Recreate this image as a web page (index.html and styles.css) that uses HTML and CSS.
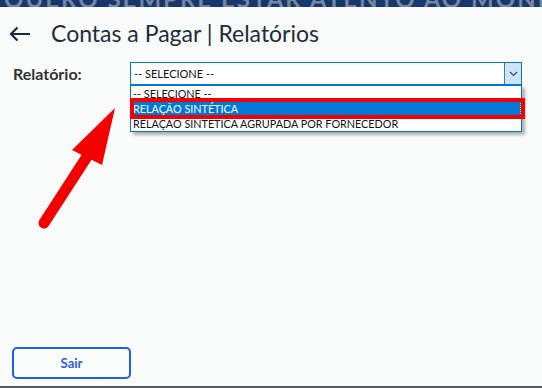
FILE: index.html
```html
<!DOCTYPE html>
<html lang="pt-BR">
<head>
    <meta charset="UTF-8">
    <meta name="viewport" content="width=device-width, initial-scale=1.0">
    <title>Contas a Pagar | Relatórios</title>
    <link rel="stylesheet" href="styles.css">
</head>
<body>
    <div class="page">
        <div class="banner">
            <span>QUERO SEMPRE ESTAR ATENTO AO MONITOR DE BALANÇO</span>
        </div>

        <header class="titlebar">
            <svg class="back" width="22" height="16" viewBox="0 0 22 16">
                <path d="M21 8H2M8.5 1.5L2 8l6.5 6.5" fill="none" stroke="#1c2a3a" stroke-width="2.2"/>
            </svg>
            <h1>Contas a Pagar | Relatórios</h1>
        </header>

        <div class="form-row">
            <label class="field-label">Relatório:</label>
            <div class="select">
                <span class="select-value">-- SELECIONE --</span>
                <span class="select-btn">
                    <svg width="9" height="6" viewBox="0 0 9 6">
                        <path d="M1 1l3.5 3.5L8 1" fill="none" stroke="#444" stroke-width="1.1"/>
                    </svg>
                </span>
                <ul class="select-list">
                    <li>-- SELECIONE --</li>
                    <li class="active"><span>RELAÇÃO SINTÉTICA</span></li>
                    <li>RELAÇÃO SINTÉTICA AGRUPADA POR FORNECEDOR</li>
                    <li class="mark"></li>
                </ul>
            </div>
        </div>

        <div class="spacer"></div>

        <footer class="actions">
            <button class="btn-exit">Sair</button>
        </footer>
        <div class="bottom-line"></div>

        <!-- seta de destaque -->
        <svg class="pointer" width="542" height="388" viewBox="0 0 542 388">
            <line x1="90" y1="152" x2="44" y2="223" stroke="#f40000" stroke-width="11" stroke-linecap="round"/>
            <polygon points="115,108 72,150 102,165" fill="#f40000"/>
        </svg>
    </div>
</body>
</html>
```

FILE: styles.css
```css
* {
    box-sizing: border-box;
}

body {
    font-family: Lato, "Open Sans", sans-serif;
    margin: 0;
    padding: 0;
    background-color: #f9fafa;
}

.page {
    position: relative;
    height: 388px;
    display: flex;
    flex-direction: column;
    overflow: hidden;
}

.banner {
    height: 7px;
    background-color: #17386e;
    display: flex;
    align-items: flex-end;
    overflow: hidden;
    padding-left: 4px;
}

.banner span {
    font-size: 24px;
    font-weight: bold;
    line-height: 1;
    letter-spacing: 2px;
    color: #7686a3;
    white-space: nowrap;
    margin-bottom: -4px;
}

.titlebar {
    height: 52px;
    display: flex;
    align-items: center;
    padding-left: 9px;
}

.titlebar .back {
    margin-top: 2px;
}

.titlebar h1 {
    margin: 0 0 0 20px;
    font-size: 23px;
    font-weight: normal;
    color: #1e2d3d;
}

.form-row {
    margin-top: 3px;
    display: flex;
    align-items: center;
    padding-left: 13px;
}

.field-label {
    width: 117px;
    font-size: 16px;
    font-weight: bold;
    color: #333;
}

.select {
    position: relative;
    width: 392px;
    height: 23px;
    border: 1px solid #0078d7;
    background-color: #fff;
    display: flex;
    align-items: center;
    font-size: 11px;
    color: #111;
}

.select-value {
    flex: 1;
    padding-left: 3px;
}

.select-btn {
    width: 17px;
    height: 21px;
    background-color: #cce4f7;
    border-left: 1px solid #3d7bab;
    display: flex;
    align-items: center;
    justify-content: center;
}

.select-list {
    position: absolute;
    top: 22px;
    left: -1px;
    width: 392px;
    margin: 0;
    padding: 0;
    list-style: none;
    background-color: #fff;
    border: 1px solid #0078d7;
    box-shadow: 3px 3px 3px rgba(0, 0, 0, 0.3);
    font-size: 10.8px;
}

.select-list li {
    height: 15px;
    line-height: 15px;
    padding-left: 2px;
    white-space: nowrap;
}

.select-list li.active {
    background-color: #0078d7;
    color: #fff;
    padding: 0;
}

.select-list li.active span {
    display: block;
    height: 15px;
    padding-left: 1px;
    border: 1px dotted #f0c040;
    line-height: 13px;
}

.select-list li.mark {
    position: absolute;
    top: 12px;
    left: -1px;
    width: 395px;
    height: 21px;
    border: 4px solid #f40000;
    padding: 0;
}

.spacer {
    flex: 1;
}

.actions {
    padding-left: 12px;
    margin-bottom: 7px;
}

.btn-exit {
    width: 119px;
    height: 32px;
    border: 2px solid #1f5fe8;
    border-radius: 5px;
    background-color: #fbfcfc;
    color: #2b5ce4;
    font-family: Lato, sans-serif;
    font-size: 13px;
    font-weight: bold;
    cursor: pointer;
}

.bottom-line {
    height: 2px;
    background-color: #555b5e;
}

.pointer {
    position: absolute;
    top: 0;
    left: 0;
    pointer-events: none;
}
```
